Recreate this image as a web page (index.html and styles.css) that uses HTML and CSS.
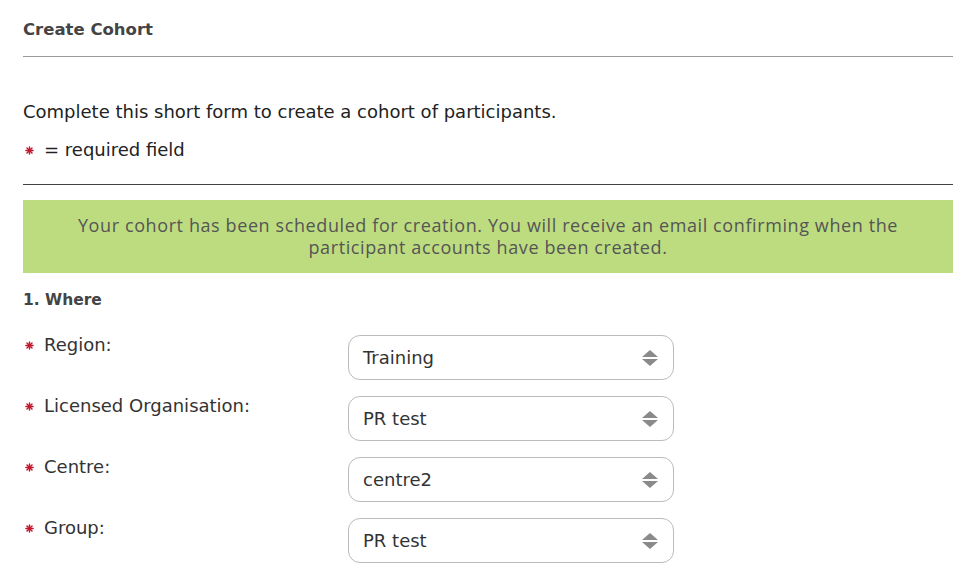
FILE: index.html
```html
<!DOCTYPE html>
<html>
<head>
<meta charset="utf-8">
<link rel="stylesheet" href="styles.css">
</head>
<body>
<div class="page">
  <h1 class="title">Create Cohort</h1>
  <hr class="rule light">
  <p class="intro">Complete this short form to create a cohort of participants.</p>
  <p class="req"><span class="star"><svg width="9" height="9" viewBox="0 0 10 10"><g stroke="#c4162f" stroke-width="1.6" stroke-linecap="round"><line x1="5" y1="1" x2="5" y2="9"/><line x1="1" y1="5" x2="9" y2="5"/><line x1="2.2" y1="2.2" x2="7.8" y2="7.8"/><line x1="7.8" y1="2.2" x2="2.2" y2="7.8"/></g><circle cx="5" cy="5" r="2" fill="#c4162f"/></svg></span> = required field</p>
  <hr class="rule dark">
  <div class="banner">Your cohort has been scheduled for creation. You will receive an email confirming when the participant accounts have been created.</div>
  <h2 class="section">1. Where</h2>
  <div class="rows">
    <div class="row">
      <label class="label"><span class="star"><svg width="9" height="9" viewBox="0 0 10 10"><g stroke="#c4162f" stroke-width="1.6" stroke-linecap="round"><line x1="5" y1="1" x2="5" y2="9"/><line x1="1" y1="5" x2="9" y2="5"/><line x1="2.2" y1="2.2" x2="7.8" y2="7.8"/><line x1="7.8" y1="2.2" x2="2.2" y2="7.8"/></g><circle cx="5" cy="5" r="2" fill="#c4162f"/></svg></span>Region:</label>
      <div class="select"><span>Training</span><svg class="arrows" width="18" height="18" viewBox="0 0 18 18"><path d="M9 1 L17 8 H1 Z M1 10 H17 L9 17 Z" fill="#8a8a8a"/></svg></div>
    </div>
    <div class="row">
      <label class="label"><span class="star"><svg width="9" height="9" viewBox="0 0 10 10"><g stroke="#c4162f" stroke-width="1.6" stroke-linecap="round"><line x1="5" y1="1" x2="5" y2="9"/><line x1="1" y1="5" x2="9" y2="5"/><line x1="2.2" y1="2.2" x2="7.8" y2="7.8"/><line x1="7.8" y1="2.2" x2="2.2" y2="7.8"/></g><circle cx="5" cy="5" r="2" fill="#c4162f"/></svg></span>Licensed Organisation:</label>
      <div class="select"><span>PR test</span><svg class="arrows" width="18" height="18" viewBox="0 0 18 18"><path d="M9 1 L17 8 H1 Z M1 10 H17 L9 17 Z" fill="#8a8a8a"/></svg></div>
    </div>
    <div class="row">
      <label class="label"><span class="star"><svg width="9" height="9" viewBox="0 0 10 10"><g stroke="#c4162f" stroke-width="1.6" stroke-linecap="round"><line x1="5" y1="1" x2="5" y2="9"/><line x1="1" y1="5" x2="9" y2="5"/><line x1="2.2" y1="2.2" x2="7.8" y2="7.8"/><line x1="7.8" y1="2.2" x2="2.2" y2="7.8"/></g><circle cx="5" cy="5" r="2" fill="#c4162f"/></svg></span>Centre:</label>
      <div class="select"><span>centre2</span><svg class="arrows" width="18" height="18" viewBox="0 0 18 18"><path d="M9 1 L17 8 H1 Z M1 10 H17 L9 17 Z" fill="#8a8a8a"/></svg></div>
    </div>
    <div class="row">
      <label class="label"><span class="star"><svg width="9" height="9" viewBox="0 0 10 10"><g stroke="#c4162f" stroke-width="1.6" stroke-linecap="round"><line x1="5" y1="1" x2="5" y2="9"/><line x1="1" y1="5" x2="9" y2="5"/><line x1="2.2" y1="2.2" x2="7.8" y2="7.8"/><line x1="7.8" y1="2.2" x2="2.2" y2="7.8"/></g><circle cx="5" cy="5" r="2" fill="#c4162f"/></svg></span>Group:</label>
      <div class="select"><span>PR test</span><svg class="arrows" width="18" height="18" viewBox="0 0 18 18"><path d="M9 1 L17 8 H1 Z M1 10 H17 L9 17 Z" fill="#8a8a8a"/></svg></div>
    </div>
  </div>
</div>
</body>
</html>
```

FILE: styles.css
```css
html, body {
  margin: 0;
  padding: 0;
  background: #fff;
}
body {
  font-family: "DejaVu Sans", "Noto Sans", sans-serif;
  color: #333;
}
.page {
  width: 930px;
  padding: 0 23px;
}
.title {
  margin: 0;
  padding-top: 19px;
  height: 37px;
  font-size: 16.5px;
  font-weight: 700;
  color: #444;
  line-height: 22px;
}
.rule {
  margin: 0;
  border: none;
  height: 1px;
}
.rule.light { background: #9a9a9a; }
.rule.dark { background: #444; }
.intro {
  margin: 0;
  padding-top: 42px;
  font-size: 18px;
  line-height: 26px;
  color: #222;
}
.req {
  margin: 12px 0 21px;
  font-size: 18px;
  line-height: 26px;
  color: #222;
  display: flex;
  align-items: center;
}
.req .star { margin-right: 10px; }
.star {
  display: inline-flex;
  width: 9px;
  height: 9px;
  margin-left: 2px;
}
.banner {
  margin-top: 15px;
  background: #bddc80;
  color: #555;
  font-family: "Open Sans", sans-serif;
  font-size: 18px;
  letter-spacing: 0.6px;
  line-height: 22px;
  text-align: center;
  padding: 14px 40px 15px;
}
.section {
  margin: 0;
  padding-top: 16px;
  font-size: 15.5px;
  font-weight: 700;
  color: #444;
  line-height: 22px;
}
.rows {
  display: flex;
  flex-direction: column;
  gap: 16px;
  margin-top: 24px;
}
.row {
  display: flex;
  align-items: flex-start;
}
.label {
  width: 325px;
  display: flex;
  align-items: center;
  font-size: 18px;
  line-height: 22px;
  color: #333;
  margin-top: -1px;
}
.label .star { margin-right: 10px; }
.select {
  width: 296px;
  height: 43px;
  border: 1px solid #bbb;
  border-radius: 12px;
  display: flex;
  align-items: center;
  justify-content: space-between;
  padding: 0 14px 0 14px;
  font-size: 18px;
  color: #333;
}
.arrows { display: block; }
```
